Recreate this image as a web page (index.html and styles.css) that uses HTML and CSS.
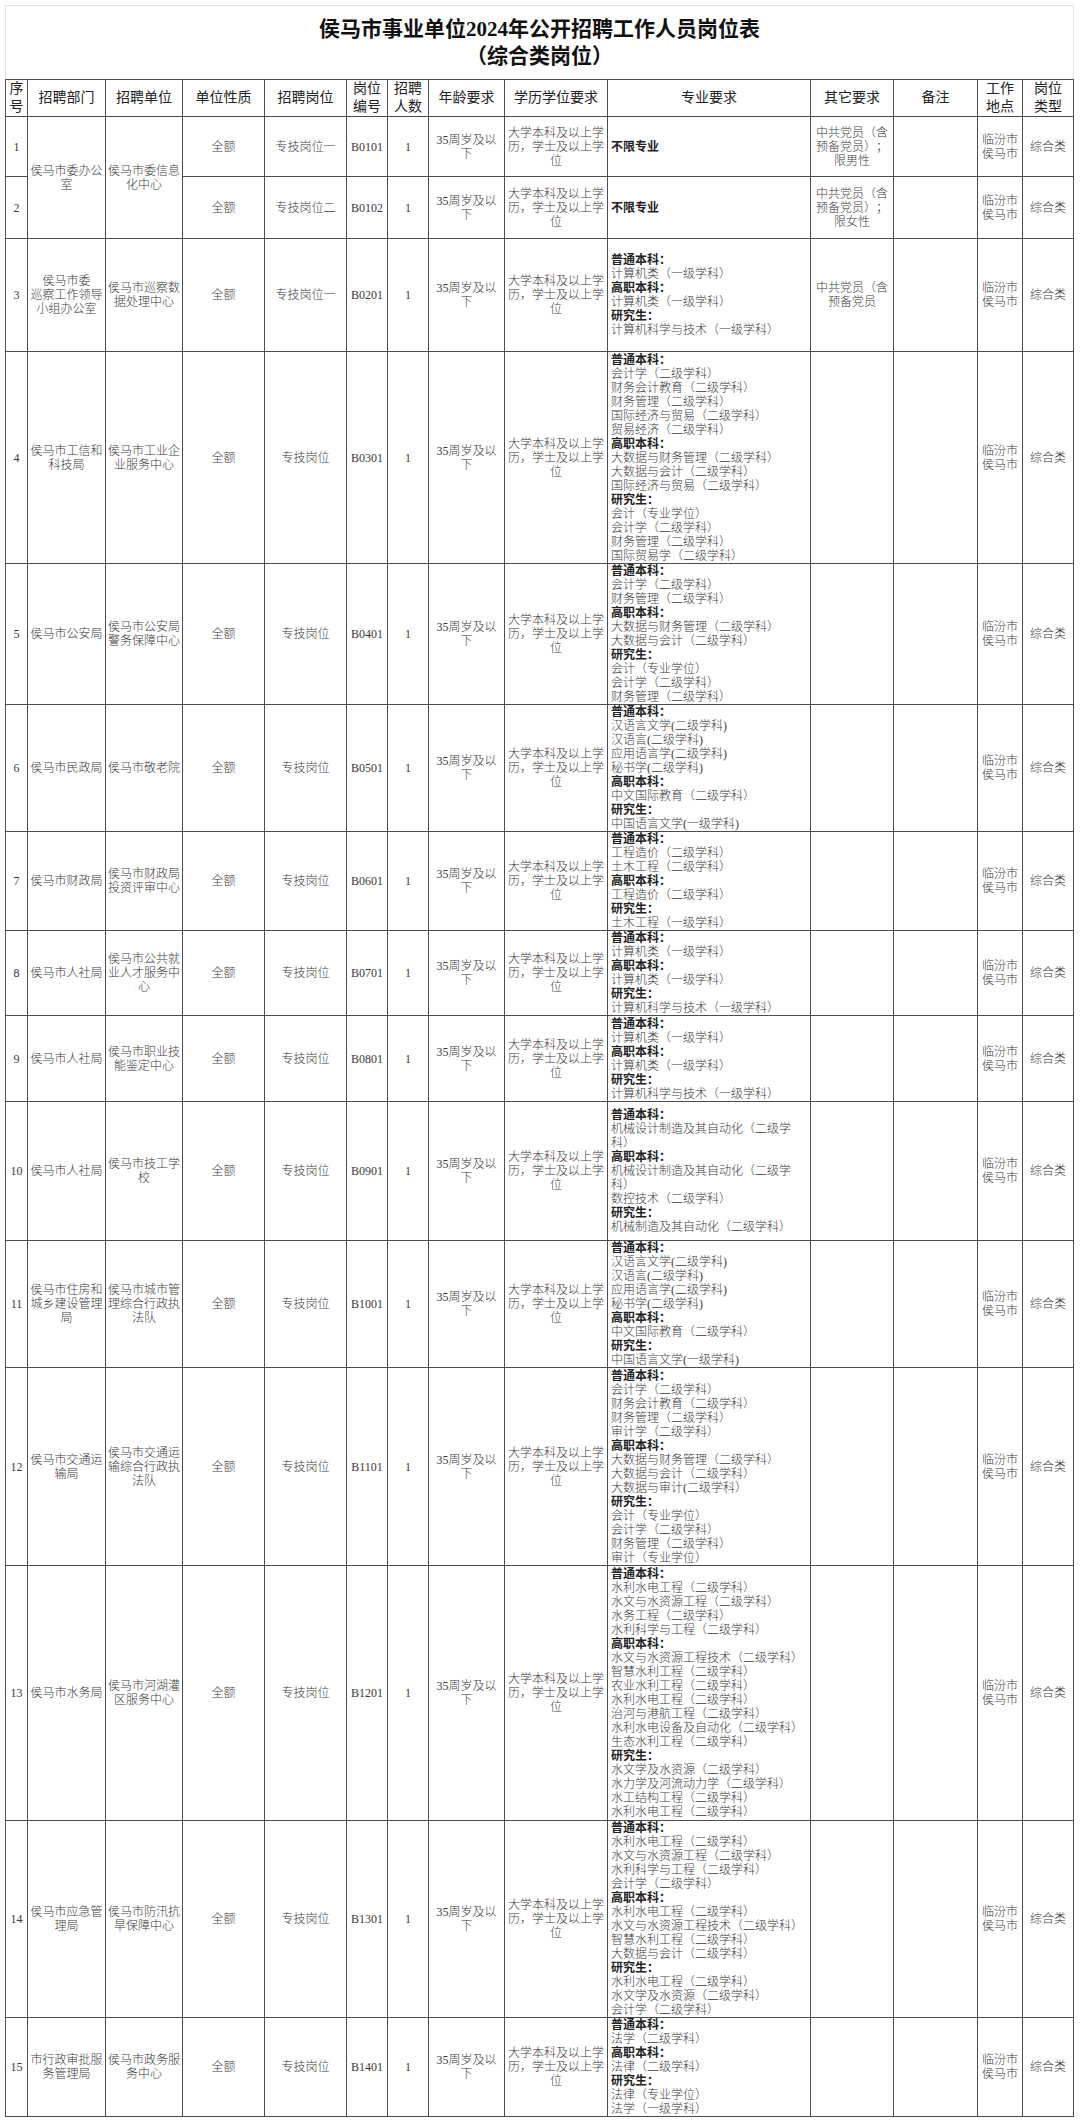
FILE: index.html
```html
<!DOCTYPE html>
<html lang="zh-CN">
<head>
<meta charset="utf-8">
<title>侯马市事业单位2024年公开招聘工作人员岗位表</title>
<link rel="stylesheet" href="styles.css">
</head>
<body>
<div class="page">
  <div class="title">
    <div>侯马市事业单位2024年公开招聘工作人员岗位表</div>
    <div>（综合类岗位）</div>
  </div>
  <table class="grid">
    <colgroup>
      <col class="c-no"><col class="c-dept"><col class="c-unit"><col class="c-kind"><col class="c-post">
      <col class="c-code"><col class="c-num"><col class="c-age"><col class="c-edu"><col class="c-spec">
      <col class="c-other"><col class="c-note"><col class="c-loc"><col class="c-type">
    </colgroup>
    <thead>
      <tr class="hrow">
        <th>序<br>号</th><th>招聘部门</th><th>招聘单位</th><th>单位性质</th><th>招聘岗位</th>
        <th>岗位<br>编号</th><th>招聘<br>人数</th><th>年龄要求</th><th>学历学位要求</th><th>专业要求</th>
        <th>其它要求</th><th>备注</th><th>工作<br>地点</th><th>岗位<br>类型</th>
      </tr>
    </thead>
    <tbody>
      <tr class="r1">
        <td>1</td><td rowspan="2">侯马市委办公室</td><td rowspan="2">侯马市委信息化中心</td><td>全额</td><td>专技岗位一</td>
        <td>B0101</td><td>1</td><td class="age">35周岁及以下</td><td>大学本科及以上学历，学士及以上学位</td>
        <td class="spec"><b>不限专业</b></td><td class="other">中共党员（含预备党员）；限男性</td><td></td><td>临汾市侯马市</td><td>综合类</td>
      </tr>
      <tr class="r2">
        <td>2</td><td>全额</td><td>专技岗位二</td>
        <td>B0102</td><td>1</td><td class="age">35周岁及以下</td><td>大学本科及以上学历，学士及以上学位</td>
        <td class="spec"><b>不限专业</b></td><td class="other">中共党员（含预备党员）；限女性</td><td></td><td>临汾市侯马市</td><td>综合类</td>
      </tr>
      <tr class="r3">
        <td>3</td><td>侯马市委<br>巡察工作领导<br>小组办公室</td><td>侯马市巡察数据处理中心</td><td>全额</td><td>专技岗位一</td>
        <td>B0201</td><td>1</td><td class="age">35周岁及以下</td><td>大学本科及以上学历，学士及以上学位</td>
        <td class="spec"><b>普通本科：</b><div>计算机类（一级学科）</div><b>高职本科：</b><div>计算机类（一级学科）</div><b>研究生：</b><div>计算机科学与技术（一级学科）</div></td>
        <td class="other">中共党员（含预备党员</td><td></td><td>临汾市侯马市</td><td>综合类</td>
      </tr>
      <tr class="r4">
        <td>4</td><td>侯马市工信和科技局</td><td>侯马市工业企业服务中心</td><td>全额</td><td>专技岗位</td>
        <td>B0301</td><td>1</td><td class="age">35周岁及以下</td><td>大学本科及以上学历，学士及以上学位</td>
        <td class="spec"><b>普通本科：</b><div>会计学（二级学科）</div><div>财务会计教育（二级学科）</div><div>财务管理（二级学科）</div><div>国际经济与贸易（二级学科）</div><div>贸易经济（二级学科）</div><b>高职本科：</b><div>大数据与财务管理（二级学科）</div><div>大数据与会计（二级学科）</div><div>国际经济与贸易（二级学科）</div><b>研究生：</b><div>会计（专业学位）</div><div>会计学（二级学科）</div><div>财务管理（二级学科）</div><div>国际贸易学（二级学科）</div></td>
        <td></td><td></td><td>临汾市侯马市</td><td>综合类</td>
      </tr>
      <tr class="r5">
        <td>5</td><td>侯马市公安局</td><td>侯马市公安局警务保障中心</td><td>全额</td><td>专技岗位</td>
        <td>B0401</td><td>1</td><td class="age">35周岁及以下</td><td>大学本科及以上学历，学士及以上学位</td>
        <td class="spec"><b>普通本科：</b><div>会计学（二级学科）</div><div>财务管理（二级学科）</div><b>高职本科：</b><div>大数据与财务管理（二级学科）</div><div>大数据与会计（二级学科）</div><b>研究生：</b><div>会计（专业学位）</div><div>会计学（二级学科）</div><div>财务管理（二级学科）</div></td>
        <td></td><td></td><td>临汾市侯马市</td><td>综合类</td>
      </tr>
      <tr class="r6">
        <td>6</td><td>侯马市民政局</td><td>侯马市敬老院</td><td>全额</td><td>专技岗位</td>
        <td>B0501</td><td>1</td><td class="age">35周岁及以下</td><td>大学本科及以上学历，学士及以上学位</td>
        <td class="spec"><b>普通本科：</b><div>汉语言文学(二级学科)</div><div>汉语言(二级学科)</div><div>应用语言学(二级学科)</div><div>秘书学(二级学科)</div><b>高职本科：</b><div>中文国际教育（二级学科）</div><b>研究生：</b><div>中国语言文学(一级学科)</div></td>
        <td></td><td></td><td>临汾市侯马市</td><td>综合类</td>
      </tr>
      <tr class="r7">
        <td>7</td><td>侯马市财政局</td><td>侯马市财政局投资评审中心</td><td>全额</td><td>专技岗位</td>
        <td>B0601</td><td>1</td><td class="age">35周岁及以下</td><td>大学本科及以上学历，学士及以上学位</td>
        <td class="spec"><b>普通本科：</b><div>工程造价（二级学科）</div><div>土木工程（二级学科）</div><b>高职本科：</b><div>工程造价（二级学科）</div><b>研究生：</b><div>土木工程（一级学科）</div></td>
        <td></td><td></td><td>临汾市侯马市</td><td>综合类</td>
      </tr>
      <tr class="r8">
        <td>8</td><td>侯马市人社局</td><td>侯马市公共就业人才服务中心</td><td>全额</td><td>专技岗位</td>
        <td>B0701</td><td>1</td><td class="age">35周岁及以下</td><td>大学本科及以上学历，学士及以上学位</td>
        <td class="spec"><b>普通本科：</b><div>计算机类（一级学科）</div><b>高职本科：</b><div>计算机类（一级学科）</div><b>研究生：</b><div>计算机科学与技术（一级学科）</div></td>
        <td></td><td></td><td>临汾市侯马市</td><td>综合类</td>
      </tr>
      <tr class="r9">
        <td>9</td><td>侯马市人社局</td><td>侯马市职业技能鉴定中心</td><td>全额</td><td>专技岗位</td>
        <td>B0801</td><td>1</td><td class="age">35周岁及以下</td><td>大学本科及以上学历，学士及以上学位</td>
        <td class="spec"><b>普通本科：</b><div>计算机类（一级学科）</div><b>高职本科：</b><div>计算机类（一级学科）</div><b>研究生：</b><div>计算机科学与技术（一级学科）</div></td>
        <td></td><td></td><td>临汾市侯马市</td><td>综合类</td>
      </tr>
      <tr class="r10">
        <td>10</td><td>侯马市人社局</td><td>侯马市技工学校</td><td>全额</td><td>专技岗位</td>
        <td>B0901</td><td>1</td><td class="age">35周岁及以下</td><td>大学本科及以上学历，学士及以上学位</td>
        <td class="spec"><b>普通本科：</b><div>机械设计制造及其自动化（二级学科）</div><b>高职本科：</b><div>机械设计制造及其自动化（二级学科）</div><div>数控技术（二级学科）</div><b>研究生：</b><div>机械制造及其自动化（二级学科）</div></td>
        <td></td><td></td><td>临汾市侯马市</td><td>综合类</td>
      </tr>
      <tr class="r11">
        <td>11</td><td>侯马市住房和城乡建设管理局</td><td>侯马市城市管理综合行政执法队</td><td>全额</td><td>专技岗位</td>
        <td>B1001</td><td>1</td><td class="age">35周岁及以下</td><td>大学本科及以上学历，学士及以上学位</td>
        <td class="spec"><b>普通本科：</b><div>汉语言文学(二级学科)</div><div>汉语言(二级学科)</div><div>应用语言学(二级学科)</div><div>秘书学(二级学科)</div><b>高职本科：</b><div>中文国际教育（二级学科）</div><b>研究生：</b><div>中国语言文学(一级学科)</div></td>
        <td></td><td></td><td>临汾市侯马市</td><td>综合类</td>
      </tr>
      <tr class="r12">
        <td>12</td><td>侯马市交通运输局</td><td>侯马市交通运输综合行政执法队</td><td>全额</td><td>专技岗位</td>
        <td>B1101</td><td>1</td><td class="age">35周岁及以下</td><td>大学本科及以上学历，学士及以上学位</td>
        <td class="spec"><b>普通本科：</b><div>会计学（二级学科）</div><div>财务会计教育（二级学科）</div><div>财务管理（二级学科）</div><div>审计学（二级学科）</div><b>高职本科：</b><div>大数据与财务管理（二级学科）</div><div>大数据与会计（二级学科）</div><div>大数据与审计(二级学科）</div><b>研究生：</b><div>会计（专业学位）</div><div>会计学（二级学科）</div><div>财务管理（二级学科）</div><div>审计（专业学位）</div></td>
        <td></td><td></td><td>临汾市侯马市</td><td>综合类</td>
      </tr>
      <tr class="r13">
        <td>13</td><td>侯马市水务局</td><td>侯马市河湖灌区服务中心</td><td>全额</td><td>专技岗位</td>
        <td>B1201</td><td>1</td><td class="age">35周岁及以下</td><td>大学本科及以上学历，学士及以上学位</td>
        <td class="spec"><b>普通本科：</b><div>水利水电工程（二级学科）</div><div>水文与水资源工程（二级学科）</div><div>水务工程（二级学科）</div><div>水利科学与工程（二级学科）</div><b>高职本科：</b><div>水文与水资源工程技术（二级学科）</div><div>智慧水利工程（二级学科）</div><div>农业水利工程（二级学科）</div><div>水利水电工程（二级学科）</div><div>治河与港航工程（二级学科）</div><div>水利水电设备及自动化（二级学科）</div><div>生态水利工程（二级学科）</div><b>研究生：</b><div>水文学及水资源（二级学科）</div><div>水力学及河流动力学（二级学科）</div><div>水工结构工程（二级学科）</div><div>水利水电工程（二级学科）</div></td>
        <td></td><td></td><td>临汾市侯马市</td><td>综合类</td>
      </tr>
      <tr class="r14">
        <td>14</td><td>侯马市应急管理局</td><td>侯马市防汛抗旱保障中心</td><td>全额</td><td>专技岗位</td>
        <td>B1301</td><td>1</td><td class="age">35周岁及以下</td><td>大学本科及以上学历，学士及以上学位</td>
        <td class="spec"><b>普通本科：</b><div>水利水电工程（二级学科）</div><div>水文与水资源工程（二级学科）</div><div>水利科学与工程（二级学科）</div><div>会计学（二级学科）</div><b>高职本科：</b><div>水利水电工程（二级学科）</div><div>水文与水资源工程技术（二级学科）</div><div>智慧水利工程（二级学科）</div><div>大数据与会计（二级学科）</div><b>研究生：</b><div>水利水电工程（二级学科）</div><div>水文学及水资源（二级学科）</div><div>会计学（二级学科）</div></td>
        <td></td><td></td><td>临汾市侯马市</td><td>综合类</td>
      </tr>
      <tr class="r15">
        <td>15</td><td>市行政审批服务管理局</td><td>侯马市政务服务中心</td><td>全额</td><td>专技岗位</td>
        <td>B1401</td><td>1</td><td class="age">35周岁及以下</td><td>大学本科及以上学历，学士及以上学位</td>
        <td class="spec"><b>普通本科：</b><div>法学（二级学科）</div><b>高职本科：</b><div>法律（二级学科）</div><b>研究生：</b><div>法律（专业学位）</div><div>法学（一级学科）</div></td>
        <td></td><td></td><td>临汾市侯马市</td><td>综合类</td>
      </tr>
    </tbody>
  </table>
</div>
</body>
</html>
```

FILE: styles.css
```css
html, body {
  margin: 0;
  padding: 0;
  background: #ffffff;
}

body {
  font-family: "Liberation Serif", "Noto Sans CJK SC", serif;
  color: #3a3a3a;
  text-spacing-trim: space-all;
}

.page {
  padding: 5px 0 0 5px;
  width: 1069px;
}

.title {
  box-sizing: border-box;
  height: 74px;
  border: 1px solid #e4e4e4;
  border-bottom: none;
  display: flex;
  flex-direction: column;
  align-items: center;
  justify-content: center;
  font-size: 21px;
  line-height: 27px;
  font-weight: bold;
  color: #111111;
}

.grid {
  border-collapse: collapse;
  table-layout: fixed;
  width: 1069px;
}

.grid th,
.grid td {
  border: 1px solid #4d4d4d;
  padding: 0 1px;
  text-align: center;
  vertical-align: middle;
  overflow: hidden;
}

.grid th {
  font-size: 14px;
  line-height: 18px;
  font-weight: normal;
  color: #222222;
}

.grid td {
  font-size: 12px;
  line-height: 14px;
  font-weight: 300;
  color: #3a3a3a;
}

.grid td.age {
  padding: 0 4px;
}

.grid td.other {
  padding: 0 3px;
}

.grid td.spec {
  text-align: left;
  padding: 0 2px 0 3px;
  line-height: 14px;
}

.spec b {
  display: block;
  font-weight: bold;
  color: #222222;
}

.spec div {
  display: block;
}

.c-no { width: 22px; }
.c-dept { width: 78px; }
.c-unit { width: 77px; }
.c-kind { width: 82px; }
.c-post { width: 82px; }
.c-code { width: 41px; }
.c-num { width: 41px; }
.c-age { width: 76px; }
.c-edu { width: 103px; }
.c-spec { width: 203px; }
.c-other { width: 83px; }
.c-note { width: 84px; }
.c-loc { width: 45px; }
.c-type { width: 51px; }

.hrow { height: 36px; }
.r1 { height: 60px; }
.r2 { height: 62px; }
.r3 { height: 113px; }
.r4 { height: 212px; }
.r5 { height: 141px; }
.r6 { height: 127px; }
.r7 { height: 99px; }
.r8 { height: 84px; }
.r9 { height: 86px; }
.r10 { height: 139px; }
.r11 { height: 127px; }
.r12 { height: 198px; }
.r13 { height: 255px; }
.r14 { height: 197px; }
.r15 { height: 99px; }
```
